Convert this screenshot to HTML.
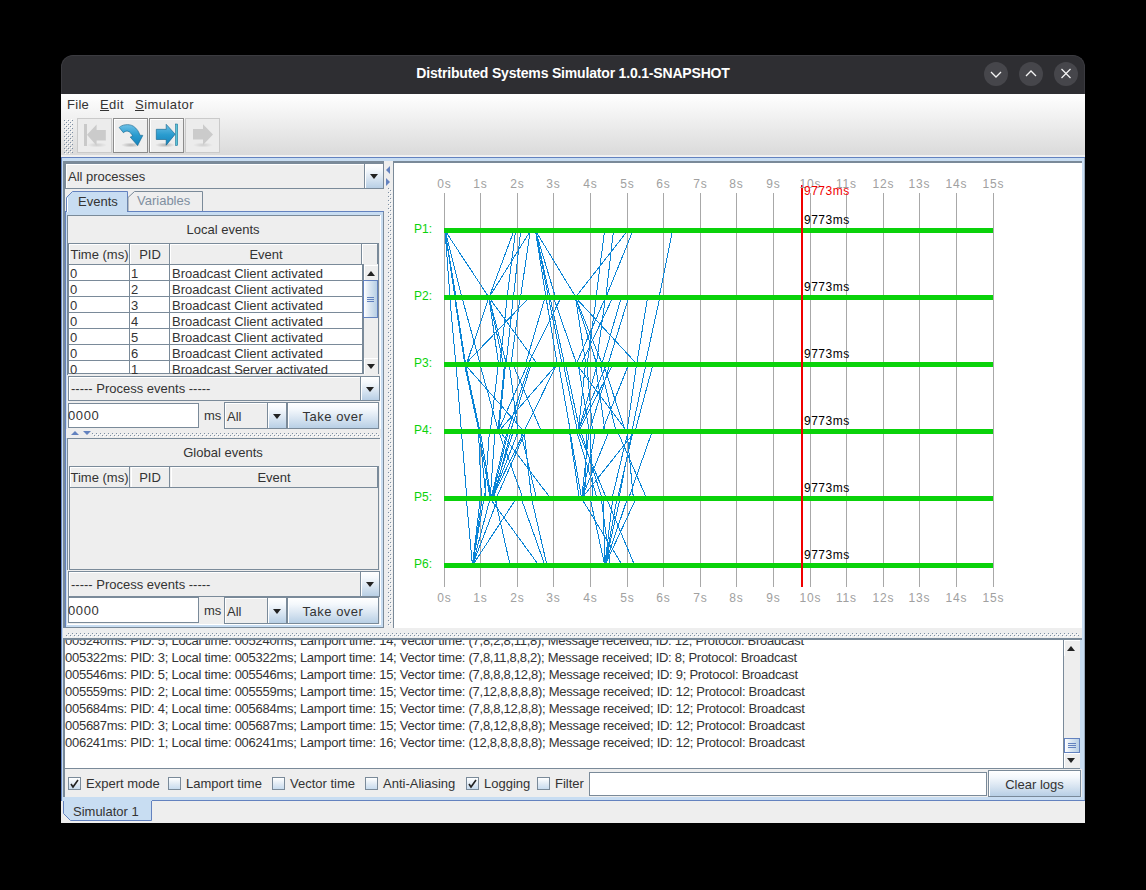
<!DOCTYPE html><html><head><meta charset="utf-8"><style>
html,body{margin:0;padding:0;width:1146px;height:890px;overflow:hidden;background:#000;font-family:"Liberation Sans", sans-serif;}
div{box-sizing:border-box;}
.dv{background-image:radial-gradient(circle at 1px 1px,#7a8a99 0.8px,transparent 1px);}
</style></head><body>
<div style="position:absolute;left:61px;top:80px;width:1024px;height:743px;background:#eeeeee;"></div>
<div style="position:absolute;left:61px;top:55px;width:1024px;height:39px;background:#2e2e32;border-radius:12px 12px 0 0;border:1px solid #3b3b40;border-bottom:none;"></div>
<div style="position:absolute;left:61px;top:64px;width:1024px;text-align:center;color:#ffffff;font-size:14px;font-weight:700;line-height:18px;letter-spacing:-0.18px;">Distributed Systems Simulator 1.0.1-SNAPSHOT</div>
<div style="position:absolute;left:984px;top:62px;width:24px;height:24px;background:#46464b;border-radius:50%;"></div>
<div style="position:absolute;left:1019px;top:62px;width:24px;height:24px;background:#46464b;border-radius:50%;"></div>
<div style="position:absolute;left:1054px;top:62px;width:24px;height:24px;background:#46464b;border-radius:50%;"></div>
<svg style="position:absolute;left:0;top:0" width="1146" height="890"><g stroke="#f4f4f4" stroke-width="1.3" fill="none"><polyline points="991,72 996,77 1001,72"/><polyline points="1026,76 1031,71 1036,76"/><line x1="1061.5" y1="69" x2="1070.5" y2="78"/><line x1="1070.5" y1="69" x2="1061.5" y2="78"/></g></svg>
<div style="position:absolute;left:61px;top:94px;width:1024px;height:61px;background:linear-gradient(#ffffff,#dadada);"></div>
<div style="position:absolute;left:61px;top:155px;width:1024px;height:2px;background:#f0f0f0;"></div>
<div style="position:absolute;left:67px;top:97px;font-size:13px;line-height:15px;color:#333333;font-weight:400;letter-spacing:0.3px;white-space:pre;">File</div>
<div style="position:absolute;left:100px;top:97px;font-size:13px;line-height:15px;color:#333333;font-weight:400;letter-spacing:0.4px;white-space:pre;"><u>E</u>dit</div>
<div style="position:absolute;left:135px;top:97px;font-size:13px;line-height:15px;color:#333333;font-weight:400;letter-spacing:0.45px;white-space:pre;"><u>S</u>imulator</div>
<svg style="position:absolute;left:0;top:0" width="1146" height="890" shape-rendering="crispEdges"><defs><pattern id="bump" x="0" y="0" width="4" height="4" patternUnits="userSpaceOnUse"><rect x="0" y="0" width="1" height="1" fill="#7c8ea3"/><rect x="1" y="1" width="1" height="1" fill="#ffffff"/><rect x="2" y="2" width="1" height="1" fill="#7c8ea3"/><rect x="3" y="3" width="1" height="1" fill="#ffffff"/></pattern></defs><rect x="64" y="119" width="9" height="35" fill="url(#bump)"/></svg>
<div style="position:absolute;left:77px;top:118px;width:35px;height:35px;border:1px solid #cacaca;background:#ececec;"></div>
<div style="position:absolute;left:113px;top:118px;width:35px;height:35px;border:1px solid #8c8c8c;background:#eeeeee;"></div>
<div style="position:absolute;left:114px;top:119px;width:33px;height:33px;border-top:1px solid #ffffff;border-left:1px solid #ffffff;"></div>
<div style="position:absolute;left:149px;top:118px;width:35px;height:35px;border:1px solid #8c8c8c;background:#eeeeee;"></div>
<div style="position:absolute;left:150px;top:119px;width:33px;height:33px;border-top:1px solid #ffffff;border-left:1px solid #ffffff;"></div>
<div style="position:absolute;left:185px;top:118px;width:35px;height:35px;border:1px solid #cacaca;background:#ececec;"></div>
<svg style="position:absolute;left:0;top:0" width="1146" height="890">
<defs>
<linearGradient id="bg1" x1="0" y1="0" x2="0" y2="1"><stop offset="0" stop-color="#6cc0e6"/><stop offset="0.5" stop-color="#2a9ccf"/><stop offset="1" stop-color="#1482bb"/></linearGradient>
<radialGradient id="sh" cx="0.5" cy="0.5" r="0.5"><stop offset="0" stop-color="#000" stop-opacity="0.25"/><stop offset="1" stop-color="#000" stop-opacity="0"/></radialGradient>
</defs>
<ellipse cx="97" cy="145" rx="10" ry="2.5" fill="url(#sh)" opacity="0.5"/>
<rect x="84" y="124" width="3" height="22" fill="#c9c9c9"/>
<path d="M87,134.7 L96.6,124.5 L96.6,129.9 L105.8,129.9 L105.8,140.5 L96.6,140.5 L96.6,145.7 Z" fill="#cbcbcb"/>
<ellipse cx="131" cy="145" rx="10" ry="2.5" fill="url(#sh)"/>
<path d="M119.2,127.5 C122,124.5 129,123.5 133.4,126.2 C137,128.5 139,132 139.9,135.2 L142.8,135.4 L137.6,145.6 L130.2,137 L132.7,136.3 C132,134.5 130,131.5 127.7,131.2 C126,131 124.5,131.6 123.4,132.7 Z" fill="url(#bg1)" stroke="#0d5f8a" stroke-width="0.6"/>
<ellipse cx="165" cy="145" rx="10" ry="2.5" fill="url(#sh)"/>
<path d="M156.3,129.3 L166.2,129.3 L166.2,124.3 L175.2,134.2 L166.2,145.2 L166.2,139.5 L156.3,139.5 Z" fill="url(#bg1)" stroke="#0d5f8a" stroke-width="0.6"/>
<rect x="175.5" y="124" width="2.2" height="21.5" fill="#5cc6d8" stroke="#0d5f8a" stroke-width="0.5"/>
<ellipse cx="203" cy="145" rx="10" ry="2.5" fill="url(#sh)" opacity="0.5"/>
<path d="M193,129 L203,129 L203,124.3 L213,134.5 L203,145 L203,139.5 L193,139.5 Z" fill="#cbcbcb"/>
</svg>
<div style="position:absolute;left:61px;top:157px;width:1024px;height:644px;background:#c8ddf2;border-top:1px solid #6382bf;border-left:1px solid #6382bf;border-bottom:1px solid #6382bf;"></div>
<div style="position:absolute;left:63px;top:161px;width:321px;height:467px;background:#eeeeee;border-top:2px solid #7a8a99;border-left:2px solid #7a8a99;"></div>
<div style="position:absolute;left:65px;top:163px;width:319px;height:26px;background:#eeeeee;border:1px solid #7a8a99;"></div>
<div style="position:absolute;left:66px;top:164px;width:298px;height:24px;border-top:1px solid #ffffff;border-left:1px solid #ffffff;"></div>
<div style="position:absolute;left:364px;top:163px;width:20px;height:26px;background:linear-gradient(#ffffff 0%,#f4f8fc 25%,#dde8f3 55%,#b8cfe5 100%);border:1px solid #7a8a99;"></div>
<div style="position:absolute;left:365px;top:164px;width:18px;height:24px;border-top:1px solid #ffffff;border-left:1px solid #ffffff;"></div>
<div style="position:absolute;left:369.5px;top:174.0px;width:0;height:0;border-left:4.5px solid transparent;border-right:4.5px solid transparent;border-top:5px solid #222;"></div>
<div style="position:absolute;left:68px;top:169px;font-size:13px;line-height:15px;color:#333333;font-weight:400;letter-spacing:0px;white-space:pre;">All processes</div>
<div style="position:absolute;left:65px;top:211px;width:319px;height:417px;background:#c8ddf2;border-top:1px solid #6382bf;border-left:1px solid #6382bf;border-right:1px solid #7a8a99;border-bottom:1px solid #7a8a99;"></div>
<div style="position:absolute;left:67px;top:215px;width:314px;height:410px;background:#eeeeee;border-right:1px solid #ffffff;border-bottom:1px solid #ffffff;"></div>
<svg style="position:absolute;left:0;top:0" width="1146" height="890"><path d="M66.5,212 L66.5,197.5 L72.5,191.5 L127.5,191.5 L127.5,211" fill="#c8ddf2" stroke="#6382bf" stroke-width="1"/><path d="M128,211 L128,197.5 L134.5,191.5 L202.5,191.5 L202.5,211" fill="#eeeeee" stroke="#7a8a99" stroke-width="1"/></svg>
<div style="position:absolute;left:67px;top:205px;width:60px;height:10px;background:#c8ddf2;"></div>
<div style="position:absolute;left:67px;top:198px;width:1px;height:14px;background:#ffffff;"></div>
<div style="position:absolute;left:78px;top:194px;font-size:13px;line-height:15px;color:#333333;font-weight:400;letter-spacing:0px;white-space:pre;">Events</div>
<div style="position:absolute;left:137px;top:193px;font-size:13px;line-height:15px;color:#7f8fa0;font-weight:400;letter-spacing:0px;white-space:pre;">Variables</div>
<div style="position:absolute;left:128px;top:211px;width:256px;height:1px;background:#6382bf;"></div>
<div style="position:absolute;left:67px;top:215px;width:313px;height:160px;border-top:1px solid #7a8a99;border-left:1px solid #7a8a99;"></div>
<div style="position:absolute;left:-77px;width:600px;text-align:center;top:222px;font-size:13px;line-height:15px;color:#333333;font-weight:400;letter-spacing:0px;white-space:pre;">Local events</div>
<div style="position:absolute;left:68px;top:243px;width:311px;height:131px;border:1px solid #7a8a99;background:#eeeeee;"></div>
<div style="position:absolute;left:69px;top:244px;width:61px;height:21px;border-right:1px solid #7a8a99;border-bottom:1px solid #7a8a99;background:#eeeeee;"></div>
<div style="position:absolute;left:69px;top:244px;width:60px;height:20px;border-top:1px solid #ffffff;border-left:1px solid #ffffff;"></div>
<div style="position:absolute;left:-200.5px;width:600px;text-align:center;top:247px;font-size:13px;line-height:15px;color:#333333;font-weight:400;letter-spacing:0px;white-space:pre;">Time (ms)</div>
<div style="position:absolute;left:130px;top:244px;width:40px;height:21px;border-right:1px solid #7a8a99;border-bottom:1px solid #7a8a99;background:#eeeeee;"></div>
<div style="position:absolute;left:130px;top:244px;width:39px;height:20px;border-top:1px solid #ffffff;border-left:1px solid #ffffff;"></div>
<div style="position:absolute;left:-150.0px;width:600px;text-align:center;top:247px;font-size:13px;line-height:15px;color:#333333;font-weight:400;letter-spacing:0px;white-space:pre;">PID</div>
<div style="position:absolute;left:170px;top:244px;width:192px;height:21px;border-right:1px solid #7a8a99;border-bottom:1px solid #7a8a99;background:#eeeeee;"></div>
<div style="position:absolute;left:170px;top:244px;width:191px;height:20px;border-top:1px solid #ffffff;border-left:1px solid #ffffff;"></div>
<div style="position:absolute;left:-34.0px;width:600px;text-align:center;top:247px;font-size:13px;line-height:15px;color:#333333;font-weight:400;letter-spacing:0px;white-space:pre;">Event</div>
<div style="position:absolute;left:362px;top:244px;width:16px;height:21px;border-right:1px solid #7a8a99;border-bottom:1px solid #7a8a99;background:#eeeeee;"></div>
<div style="position:absolute;left:362px;top:244px;width:15px;height:20px;border-top:1px solid #ffffff;border-left:1px solid #ffffff;"></div>
<div style="position:absolute;left:69px;top:265px;width:293px;height:109px;background:#ffffff;"></div>
<div style="position:absolute;left:69px;top:265px;width:61px;height:16px;border-right:1px solid #7a8a99;border-bottom:1px solid #7a8a99;"></div>
<div style="position:absolute;left:130px;top:265px;width:40px;height:16px;border-right:1px solid #7a8a99;border-bottom:1px solid #7a8a99;"></div>
<div style="position:absolute;left:170px;top:265px;width:193px;height:16px;border-right:1px solid #7a8a99;border-bottom:1px solid #7a8a99;"></div>
<div style="position:absolute;left:69px;top:265px;width:293px;height:16px;overflow:hidden;"><div style="position:absolute;left:1px;top:1px;font-size:13px;line-height:15px;color:#333333;white-space:pre">0</div><div style="position:absolute;left:62px;top:1px;font-size:13px;line-height:15px;color:#333333;white-space:pre">1</div><div style="position:absolute;left:103px;top:1px;font-size:13px;line-height:15px;color:#333333;white-space:pre">Broadcast Client activated</div></div>
<div style="position:absolute;left:69px;top:281px;width:61px;height:16px;border-right:1px solid #7a8a99;border-bottom:1px solid #7a8a99;"></div>
<div style="position:absolute;left:130px;top:281px;width:40px;height:16px;border-right:1px solid #7a8a99;border-bottom:1px solid #7a8a99;"></div>
<div style="position:absolute;left:170px;top:281px;width:193px;height:16px;border-right:1px solid #7a8a99;border-bottom:1px solid #7a8a99;"></div>
<div style="position:absolute;left:69px;top:281px;width:293px;height:16px;overflow:hidden;"><div style="position:absolute;left:1px;top:1px;font-size:13px;line-height:15px;color:#333333;white-space:pre">0</div><div style="position:absolute;left:62px;top:1px;font-size:13px;line-height:15px;color:#333333;white-space:pre">2</div><div style="position:absolute;left:103px;top:1px;font-size:13px;line-height:15px;color:#333333;white-space:pre">Broadcast Client activated</div></div>
<div style="position:absolute;left:69px;top:297px;width:61px;height:16px;border-right:1px solid #7a8a99;border-bottom:1px solid #7a8a99;"></div>
<div style="position:absolute;left:130px;top:297px;width:40px;height:16px;border-right:1px solid #7a8a99;border-bottom:1px solid #7a8a99;"></div>
<div style="position:absolute;left:170px;top:297px;width:193px;height:16px;border-right:1px solid #7a8a99;border-bottom:1px solid #7a8a99;"></div>
<div style="position:absolute;left:69px;top:297px;width:293px;height:16px;overflow:hidden;"><div style="position:absolute;left:1px;top:1px;font-size:13px;line-height:15px;color:#333333;white-space:pre">0</div><div style="position:absolute;left:62px;top:1px;font-size:13px;line-height:15px;color:#333333;white-space:pre">3</div><div style="position:absolute;left:103px;top:1px;font-size:13px;line-height:15px;color:#333333;white-space:pre">Broadcast Client activated</div></div>
<div style="position:absolute;left:69px;top:313px;width:61px;height:16px;border-right:1px solid #7a8a99;border-bottom:1px solid #7a8a99;"></div>
<div style="position:absolute;left:130px;top:313px;width:40px;height:16px;border-right:1px solid #7a8a99;border-bottom:1px solid #7a8a99;"></div>
<div style="position:absolute;left:170px;top:313px;width:193px;height:16px;border-right:1px solid #7a8a99;border-bottom:1px solid #7a8a99;"></div>
<div style="position:absolute;left:69px;top:313px;width:293px;height:16px;overflow:hidden;"><div style="position:absolute;left:1px;top:1px;font-size:13px;line-height:15px;color:#333333;white-space:pre">0</div><div style="position:absolute;left:62px;top:1px;font-size:13px;line-height:15px;color:#333333;white-space:pre">4</div><div style="position:absolute;left:103px;top:1px;font-size:13px;line-height:15px;color:#333333;white-space:pre">Broadcast Client activated</div></div>
<div style="position:absolute;left:69px;top:329px;width:61px;height:16px;border-right:1px solid #7a8a99;border-bottom:1px solid #7a8a99;"></div>
<div style="position:absolute;left:130px;top:329px;width:40px;height:16px;border-right:1px solid #7a8a99;border-bottom:1px solid #7a8a99;"></div>
<div style="position:absolute;left:170px;top:329px;width:193px;height:16px;border-right:1px solid #7a8a99;border-bottom:1px solid #7a8a99;"></div>
<div style="position:absolute;left:69px;top:329px;width:293px;height:16px;overflow:hidden;"><div style="position:absolute;left:1px;top:1px;font-size:13px;line-height:15px;color:#333333;white-space:pre">0</div><div style="position:absolute;left:62px;top:1px;font-size:13px;line-height:15px;color:#333333;white-space:pre">5</div><div style="position:absolute;left:103px;top:1px;font-size:13px;line-height:15px;color:#333333;white-space:pre">Broadcast Client activated</div></div>
<div style="position:absolute;left:69px;top:345px;width:61px;height:16px;border-right:1px solid #7a8a99;border-bottom:1px solid #7a8a99;"></div>
<div style="position:absolute;left:130px;top:345px;width:40px;height:16px;border-right:1px solid #7a8a99;border-bottom:1px solid #7a8a99;"></div>
<div style="position:absolute;left:170px;top:345px;width:193px;height:16px;border-right:1px solid #7a8a99;border-bottom:1px solid #7a8a99;"></div>
<div style="position:absolute;left:69px;top:345px;width:293px;height:16px;overflow:hidden;"><div style="position:absolute;left:1px;top:1px;font-size:13px;line-height:15px;color:#333333;white-space:pre">0</div><div style="position:absolute;left:62px;top:1px;font-size:13px;line-height:15px;color:#333333;white-space:pre">6</div><div style="position:absolute;left:103px;top:1px;font-size:13px;line-height:15px;color:#333333;white-space:pre">Broadcast Client activated</div></div>
<div style="position:absolute;left:69px;top:361px;width:61px;height:13px;border-right:1px solid #7a8a99;border-bottom:1px solid #7a8a99;"></div>
<div style="position:absolute;left:130px;top:361px;width:40px;height:13px;border-right:1px solid #7a8a99;border-bottom:1px solid #7a8a99;"></div>
<div style="position:absolute;left:170px;top:361px;width:193px;height:13px;border-right:1px solid #7a8a99;border-bottom:1px solid #7a8a99;"></div>
<div style="position:absolute;left:69px;top:361px;width:293px;height:13px;overflow:hidden;"><div style="position:absolute;left:1px;top:1px;font-size:13px;line-height:15px;color:#333333;white-space:pre">0</div><div style="position:absolute;left:62px;top:1px;font-size:13px;line-height:15px;color:#333333;white-space:pre">1</div><div style="position:absolute;left:103px;top:1px;font-size:13px;line-height:15px;color:#333333;white-space:pre">Broadcast Server activated</div></div>
<div style="position:absolute;left:363px;top:264px;width:15px;height:110px;background:#eeeeee;border-left:1px solid #7a8a99;"></div>
<div style="position:absolute;left:364px;top:265px;width:14px;height:15px;border-top:1px solid #fff;border-left:1px solid #fff;"></div>
<div style="position:absolute;left:366.5px;top:270.5px;width:0;height:0;border-left:4.5px solid transparent;border-right:4.5px solid transparent;border-bottom:5px solid #222;"></div>
<div style="position:absolute;left:363px;top:280px;width:15px;height:38px;background:linear-gradient(90deg,#ffffff,#dde8f3 40%,#b8cfe5);border:1px solid #6382bf;"></div>
<div style="position:absolute;left:367px;top:297px;width:7px;height:1px;background:#6382bf;"></div>
<div style="position:absolute;left:367px;top:299px;width:7px;height:1px;background:#6382bf;"></div>
<div style="position:absolute;left:367px;top:301px;width:7px;height:1px;background:#6382bf;"></div>
<div style="position:absolute;left:364px;top:358px;width:14px;height:16px;border-top:1px solid #fff;border-left:1px solid #fff;"></div>
<div style="position:absolute;left:366.5px;top:363.5px;width:0;height:0;border-left:4.5px solid transparent;border-right:4.5px solid transparent;border-top:5px solid #222;"></div>
<div style="position:absolute;left:68px;top:376px;width:312px;height:25px;background:#eeeeee;border:1px solid #7a8a99;"></div>
<div style="position:absolute;left:69px;top:377px;width:291px;height:23px;border-top:1px solid #ffffff;border-left:1px solid #ffffff;"></div>
<div style="position:absolute;left:360px;top:376px;width:20px;height:25px;background:linear-gradient(#ffffff 0%,#f4f8fc 25%,#dde8f3 55%,#b8cfe5 100%);border:1px solid #7a8a99;"></div>
<div style="position:absolute;left:361px;top:377px;width:18px;height:23px;border-top:1px solid #ffffff;border-left:1px solid #ffffff;"></div>
<div style="position:absolute;left:365.5px;top:386.5px;width:0;height:0;border-left:4.5px solid transparent;border-right:4.5px solid transparent;border-top:5px solid #222;"></div>
<div style="position:absolute;left:71px;top:381px;font-size:13px;line-height:15px;color:#333333;font-weight:400;letter-spacing:0px;white-space:pre;">----- Process events -----</div>
<div style="position:absolute;left:68px;top:403px;width:131px;height:25px;background:#ffffff;border:1px solid #7a8a99;"></div>
<div style="position:absolute;left:68px;top:408px;font-size:13px;line-height:15px;color:#333333;font-weight:400;letter-spacing:0.6px;white-space:pre;">0000</div>
<div style="position:absolute;left:204px;top:408px;font-size:13px;line-height:15px;color:#333333;font-weight:400;letter-spacing:0px;white-space:pre;">ms</div>
<div style="position:absolute;left:224px;top:402px;width:63px;height:27px;background:#eeeeee;border:1px solid #7a8a99;"></div>
<div style="position:absolute;left:225px;top:403px;width:42px;height:25px;border-top:1px solid #ffffff;border-left:1px solid #ffffff;"></div>
<div style="position:absolute;left:267px;top:402px;width:20px;height:27px;background:linear-gradient(#ffffff 0%,#f4f8fc 25%,#dde8f3 55%,#b8cfe5 100%);border:1px solid #7a8a99;"></div>
<div style="position:absolute;left:268px;top:403px;width:18px;height:25px;border-top:1px solid #ffffff;border-left:1px solid #ffffff;"></div>
<div style="position:absolute;left:272.5px;top:413.5px;width:0;height:0;border-left:4.5px solid transparent;border-right:4.5px solid transparent;border-top:5px solid #222;"></div>
<div style="position:absolute;left:227px;top:409px;font-size:13px;line-height:15px;color:#333333;font-weight:400;letter-spacing:0px;white-space:pre;">All</div>
<div style="position:absolute;left:287px;top:402px;width:92px;height:27px;background:linear-gradient(#ffffff 0%,#f4f8fc 25%,#dde8f3 55%,#b8cfe5 100%);border:1px solid #7a8a99;"></div>
<div style="position:absolute;left:288px;top:403px;width:90px;height:25px;border-top:1px solid #ffffff;border-left:1px solid #ffffff;"></div>
<div style="position:absolute;left:33.0px;width:600px;text-align:center;top:409px;font-size:13px;line-height:15px;color:#333333;font-weight:400;letter-spacing:0.5px;white-space:pre;">Take over</div>
<div style="position:absolute;left:66px;top:429px;width:315px;height:9px;background:#eeeeee;"></div>
<svg style="position:absolute;left:0;top:0" width="1146" height="890" shape-rendering="crispEdges"><rect x="92" y="433" width="288" height="4" fill="url(#bump1)"/></svg>
<div style="position:absolute;left:71.0px;top:431.0px;width:0;height:0;border-left:4.0px solid transparent;border-right:4.0px solid transparent;border-bottom:4px solid #6382bf;"></div>
<div style="position:absolute;left:83.0px;top:431.0px;width:0;height:0;border-left:4.0px solid transparent;border-right:4.0px solid transparent;border-top:4px solid #6382bf;"></div>
<div style="position:absolute;left:67px;top:438px;width:313px;height:132px;border-top:1px solid #7a8a99;border-left:1px solid #7a8a99;"></div>
<div style="position:absolute;left:-77px;width:600px;text-align:center;top:445px;font-size:13px;line-height:15px;color:#333333;font-weight:400;letter-spacing:0px;white-space:pre;">Global events</div>
<div style="position:absolute;left:69px;top:466px;width:310px;height:104px;border:1px solid #7a8a99;border-top:none;background:#eeeeee;"></div>
<div style="position:absolute;left:69px;top:466px;width:61px;height:22px;border-right:1px solid #7a8a99;border-bottom:1px solid #7a8a99;border-top:1px solid #7a8a99;"></div>
<div style="position:absolute;left:70px;top:467px;width:59px;height:20px;border-top:1px solid #ffffff;border-left:1px solid #ffffff;"></div>
<div style="position:absolute;left:-200.5px;width:600px;text-align:center;top:470px;font-size:13px;line-height:15px;color:#333333;font-weight:400;letter-spacing:0px;white-space:pre;">Time (ms)</div>
<div style="position:absolute;left:130px;top:466px;width:40px;height:22px;border-right:1px solid #7a8a99;border-bottom:1px solid #7a8a99;border-top:1px solid #7a8a99;"></div>
<div style="position:absolute;left:131px;top:467px;width:38px;height:20px;border-top:1px solid #ffffff;border-left:1px solid #ffffff;"></div>
<div style="position:absolute;left:-150.0px;width:600px;text-align:center;top:470px;font-size:13px;line-height:15px;color:#333333;font-weight:400;letter-spacing:0px;white-space:pre;">PID</div>
<div style="position:absolute;left:170px;top:466px;width:208px;height:22px;border-right:1px solid #7a8a99;border-bottom:1px solid #7a8a99;border-top:1px solid #7a8a99;"></div>
<div style="position:absolute;left:171px;top:467px;width:206px;height:20px;border-top:1px solid #ffffff;border-left:1px solid #ffffff;"></div>
<div style="position:absolute;left:-26.0px;width:600px;text-align:center;top:470px;font-size:13px;line-height:15px;color:#333333;font-weight:400;letter-spacing:0px;white-space:pre;">Event</div>
<div style="position:absolute;left:68px;top:571px;width:312px;height:26px;background:#eeeeee;border:1px solid #7a8a99;"></div>
<div style="position:absolute;left:69px;top:572px;width:291px;height:24px;border-top:1px solid #ffffff;border-left:1px solid #ffffff;"></div>
<div style="position:absolute;left:360px;top:571px;width:20px;height:26px;background:linear-gradient(#ffffff 0%,#f4f8fc 25%,#dde8f3 55%,#b8cfe5 100%);border:1px solid #7a8a99;"></div>
<div style="position:absolute;left:361px;top:572px;width:18px;height:24px;border-top:1px solid #ffffff;border-left:1px solid #ffffff;"></div>
<div style="position:absolute;left:365.5px;top:582.0px;width:0;height:0;border-left:4.5px solid transparent;border-right:4.5px solid transparent;border-top:5px solid #222;"></div>
<div style="position:absolute;left:71px;top:577px;font-size:13px;line-height:15px;color:#333333;font-weight:400;letter-spacing:0px;white-space:pre;">----- Process events -----</div>
<div style="position:absolute;left:68px;top:597px;width:131px;height:26px;background:#ffffff;border:1px solid #7a8a99;"></div>
<div style="position:absolute;left:68px;top:603px;font-size:13px;line-height:15px;color:#333333;font-weight:400;letter-spacing:0.6px;white-space:pre;">0000</div>
<div style="position:absolute;left:204px;top:603px;font-size:13px;line-height:15px;color:#333333;font-weight:400;letter-spacing:0px;white-space:pre;">ms</div>
<div style="position:absolute;left:224px;top:597px;width:63px;height:27px;background:#eeeeee;border:1px solid #7a8a99;"></div>
<div style="position:absolute;left:225px;top:598px;width:42px;height:25px;border-top:1px solid #ffffff;border-left:1px solid #ffffff;"></div>
<div style="position:absolute;left:267px;top:597px;width:20px;height:27px;background:linear-gradient(#ffffff 0%,#f4f8fc 25%,#dde8f3 55%,#b8cfe5 100%);border:1px solid #7a8a99;"></div>
<div style="position:absolute;left:268px;top:598px;width:18px;height:25px;border-top:1px solid #ffffff;border-left:1px solid #ffffff;"></div>
<div style="position:absolute;left:272.5px;top:608.5px;width:0;height:0;border-left:4.5px solid transparent;border-right:4.5px solid transparent;border-top:5px solid #222;"></div>
<div style="position:absolute;left:227px;top:604px;font-size:13px;line-height:15px;color:#333333;font-weight:400;letter-spacing:0px;white-space:pre;">All</div>
<div style="position:absolute;left:287px;top:597px;width:92px;height:27px;background:linear-gradient(#ffffff 0%,#f4f8fc 25%,#dde8f3 55%,#b8cfe5 100%);border:1px solid #7a8a99;"></div>
<div style="position:absolute;left:288px;top:598px;width:90px;height:25px;border-top:1px solid #ffffff;border-left:1px solid #ffffff;"></div>
<div style="position:absolute;left:33.0px;width:600px;text-align:center;top:604px;font-size:13px;line-height:15px;color:#333333;font-weight:400;letter-spacing:0.5px;white-space:pre;">Take over</div>
<div style="position:absolute;left:384px;top:161px;width:9px;height:467px;background:#eeeeee;"></div>
<svg style="position:absolute;left:0;top:0" width="1146" height="890" shape-rendering="crispEdges"><rect x="388" y="188" width="4" height="438" fill="url(#bump)"/></svg>
<svg style="position:absolute;left:0;top:0" width="1146" height="890"><path d="M390,166 L386,170 L390,174 Z" fill="#6382bf"/><path d="M386,178 L390,182 L386,186 Z" fill="#6382bf"/></svg>
<div style="position:absolute;left:393px;top:161px;width:689px;height:467px;background:#ffffff;border-top:2px solid #7a8a99;border-left:1px solid #7a8a99;"></div>
<svg style="position:absolute;left:0;top:0" width="1146" height="890" shape-rendering="crispEdges"><line x1="444.5" y1="193" x2="444.5" y2="587" stroke="#a8a8a8" stroke-width="1"/><line x1="480.5" y1="193" x2="480.5" y2="587" stroke="#a8a8a8" stroke-width="1"/><line x1="517.5" y1="193" x2="517.5" y2="587" stroke="#a8a8a8" stroke-width="1"/><line x1="553.5" y1="193" x2="553.5" y2="587" stroke="#a8a8a8" stroke-width="1"/><line x1="590.5" y1="193" x2="590.5" y2="587" stroke="#a8a8a8" stroke-width="1"/><line x1="627.5" y1="193" x2="627.5" y2="587" stroke="#a8a8a8" stroke-width="1"/><line x1="663.5" y1="193" x2="663.5" y2="587" stroke="#a8a8a8" stroke-width="1"/><line x1="700.5" y1="193" x2="700.5" y2="587" stroke="#a8a8a8" stroke-width="1"/><line x1="736.5" y1="193" x2="736.5" y2="587" stroke="#a8a8a8" stroke-width="1"/><line x1="773.5" y1="193" x2="773.5" y2="587" stroke="#a8a8a8" stroke-width="1"/><line x1="810.5" y1="193" x2="810.5" y2="587" stroke="#a8a8a8" stroke-width="1"/><line x1="846.5" y1="193" x2="846.5" y2="587" stroke="#a8a8a8" stroke-width="1"/><line x1="883.5" y1="193" x2="883.5" y2="587" stroke="#a8a8a8" stroke-width="1"/><line x1="919.5" y1="193" x2="919.5" y2="587" stroke="#a8a8a8" stroke-width="1"/><line x1="956.5" y1="193" x2="956.5" y2="587" stroke="#a8a8a8" stroke-width="1"/><line x1="993.5" y1="193" x2="993.5" y2="587" stroke="#a8a8a8" stroke-width="1"/></svg>
<svg style="position:absolute;left:0;top:0" width="1146" height="890"><g stroke="#0a84d6" stroke-width="1" fill="none" shape-rendering="crispEdges"><line x1="445" y1="230.5" x2="489" y2="297.5"/><line x1="445" y1="230.5" x2="462" y2="297.5"/><line x1="445" y1="230.5" x2="455" y2="297.5"/><line x1="445" y1="230.5" x2="456" y2="297.5"/><line x1="445" y1="230.5" x2="450" y2="297.5"/><line x1="514" y1="230.5" x2="489" y2="297.5"/><line x1="515.6" y1="230.5" x2="507" y2="297.5"/><line x1="520.7" y1="230.5" x2="513.4" y2="297.5"/><line x1="530.6" y1="230.5" x2="489" y2="297.5"/><line x1="530.3" y1="230.5" x2="520.5" y2="297.5"/><line x1="535.4" y1="230.5" x2="576" y2="297.5"/><line x1="535.4" y1="230.5" x2="555.5" y2="297.5"/><line x1="535.4" y1="230.5" x2="546" y2="297.5"/><line x1="535.4" y1="230.5" x2="548.5" y2="297.5"/><line x1="535.4" y1="230.5" x2="550" y2="297.5"/><line x1="604.6" y1="230.5" x2="596" y2="297.5"/><line x1="613.5" y1="230.5" x2="605.8" y2="297.5"/><line x1="627.8" y1="230.5" x2="575.3" y2="297.5"/><line x1="633" y1="230.5" x2="605.8" y2="297.5"/><line x1="672.6" y1="230.5" x2="659" y2="297.5"/><line x1="449.8" y1="297.5" x2="455.9" y2="364.5"/><line x1="454.6" y1="297.5" x2="464.9" y2="364.5"/><line x1="455.3" y1="297.5" x2="465.7" y2="364.5"/><line x1="462" y1="297.5" x2="480.3" y2="364.5"/><line x1="489" y1="297.5" x2="466.3" y2="364.5"/><line x1="489" y1="297.5" x2="498.6" y2="364.5"/><line x1="489" y1="297.5" x2="503.5" y2="364.5"/><line x1="489" y1="297.5" x2="506.6" y2="364.5"/><line x1="489" y1="297.5" x2="537.7" y2="364.5"/><line x1="507.2" y1="297.5" x2="499.9" y2="364.5"/><line x1="513.3" y1="297.5" x2="506" y2="364.5"/><line x1="520" y1="297.5" x2="511" y2="364.5"/><line x1="529.2" y1="297.5" x2="465" y2="364.5"/><line x1="545" y1="297.5" x2="525.5" y2="364.5"/><line x1="561" y1="297.5" x2="528" y2="364.5"/><line x1="546" y1="297.5" x2="557.3" y2="364.5"/><line x1="548.5" y1="297.5" x2="562.2" y2="364.5"/><line x1="550" y1="297.5" x2="564.6" y2="364.5"/><line x1="553.6" y1="297.5" x2="576.8" y2="364.5"/><line x1="575.5" y1="297.5" x2="637.2" y2="364.5"/><line x1="575.5" y1="297.5" x2="585.9" y2="364.5"/><line x1="575.5" y1="297.5" x2="596.9" y2="364.5"/><line x1="575.5" y1="297.5" x2="602.4" y2="364.5"/><line x1="596.3" y1="297.5" x2="587.1" y2="364.5"/><line x1="605.4" y1="297.5" x2="576.1" y2="364.5"/><line x1="605.4" y1="297.5" x2="596.3" y2="364.5"/><line x1="612.8" y1="297.5" x2="581" y2="364.5"/><line x1="621.3" y1="297.5" x2="601.8" y2="364.5"/><line x1="628.6" y1="297.5" x2="607.9" y2="364.5"/><line x1="647.6" y1="297.5" x2="636.6" y2="364.5"/><line x1="659.8" y1="297.5" x2="645.1" y2="364.5"/><line x1="456" y1="364.5" x2="461.4" y2="431.5"/><line x1="464.5" y1="364.5" x2="479" y2="431.5"/><line x1="465.5" y1="364.5" x2="480" y2="431.5"/><line x1="480" y1="364.5" x2="498.6" y2="431.5"/><line x1="465" y1="364.5" x2="524" y2="431.5"/><line x1="556.7" y1="364.5" x2="498.6" y2="431.5"/><line x1="498.3" y1="364.5" x2="490.3" y2="431.5"/><line x1="504.5" y1="364.5" x2="497.9" y2="431.5"/><line x1="505.5" y1="364.5" x2="498.8" y2="431.5"/><line x1="509.3" y1="364.5" x2="518" y2="431.5"/><line x1="527.5" y1="364.5" x2="497.9" y2="431.5"/><line x1="529.5" y1="364.5" x2="507.5" y2="431.5"/><line x1="531" y1="364.5" x2="510.5" y2="431.5"/><line x1="513" y1="364.5" x2="541.4" y2="431.5"/><line x1="556.7" y1="364.5" x2="524" y2="431.5"/><line x1="558.7" y1="364.5" x2="570.4" y2="431.5"/><line x1="563.4" y1="364.5" x2="577.5" y2="431.5"/><line x1="565.7" y1="364.5" x2="580" y2="431.5"/><line x1="576.7" y1="364.5" x2="627" y2="431.5"/><line x1="578.3" y1="364.5" x2="589.3" y2="431.5"/><line x1="585.4" y1="364.5" x2="578.3" y2="431.5"/><line x1="587" y1="364.5" x2="592.5" y2="431.5"/><line x1="595.6" y1="364.5" x2="605" y2="431.5"/><line x1="597.2" y1="364.5" x2="578.3" y2="431.5"/><line x1="600.3" y1="364.5" x2="616" y2="431.5"/><line x1="603.5" y1="364.5" x2="625.5" y2="431.5"/><line x1="606.6" y1="364.5" x2="577.5" y2="431.5"/><line x1="609.8" y1="364.5" x2="589.3" y2="431.5"/><line x1="612.8" y1="364.5" x2="578.6" y2="431.5"/><line x1="628.6" y1="364.5" x2="601.9" y2="431.5"/><line x1="636.5" y1="364.5" x2="627" y2="431.5"/><line x1="645.9" y1="364.5" x2="631.8" y2="431.5"/><line x1="653" y1="364.5" x2="635" y2="431.5"/><line x1="461.4" y1="431.5" x2="466.9" y2="498.5"/><line x1="478.5" y1="431.5" x2="481.5" y2="498.5"/><line x1="479.5" y1="431.5" x2="486" y2="498.5"/><line x1="480.3" y1="431.5" x2="491.3" y2="498.5"/><line x1="508.4" y1="431.5" x2="492" y2="498.5"/><line x1="513.3" y1="431.5" x2="492" y2="498.5"/><line x1="518.2" y1="431.5" x2="492" y2="498.5"/><line x1="524.3" y1="431.5" x2="492" y2="498.5"/><line x1="498.6" y1="431.5" x2="523" y2="498.5"/><line x1="500" y1="431.5" x2="550.7" y2="498.5"/><line x1="520.6" y1="431.5" x2="536.5" y2="498.5"/><line x1="524" y1="431.5" x2="531.6" y2="498.5"/><line x1="525.5" y1="431.5" x2="496.2" y2="498.5"/><line x1="489.4" y1="431.5" x2="484.6" y2="498.5"/><line x1="495" y1="431.5" x2="490.2" y2="498.5"/><line x1="507" y1="431.5" x2="491" y2="498.5"/><line x1="511" y1="431.5" x2="493.5" y2="498.5"/><line x1="478.9" y1="431.5" x2="490.2" y2="498.5"/><line x1="569.5" y1="431.5" x2="579.3" y2="498.5"/><line x1="635" y1="431.5" x2="581.6" y2="498.5"/><line x1="609" y1="431.5" x2="581.6" y2="498.5"/><line x1="595.6" y1="431.5" x2="581.6" y2="498.5"/><line x1="570" y1="431.5" x2="581.6" y2="498.5"/><line x1="589" y1="431.5" x2="581.6" y2="498.5"/><line x1="576.7" y1="431.5" x2="597.2" y2="498.5"/><line x1="578.3" y1="431.5" x2="606.6" y2="498.5"/><line x1="581" y1="431.5" x2="602" y2="498.5"/><line x1="587" y1="431.5" x2="584.6" y2="498.5"/><line x1="590" y1="431.5" x2="593" y2="498.5"/><line x1="617.6" y1="431.5" x2="646.7" y2="498.5"/><line x1="627" y1="431.5" x2="633.4" y2="498.5"/><line x1="632" y1="431.5" x2="618.9" y2="498.5"/><line x1="633" y1="431.5" x2="617.6" y2="498.5"/><line x1="652.2" y1="431.5" x2="628.6" y2="498.5"/><line x1="628" y1="431.5" x2="612" y2="498.5"/><line x1="466.3" y1="498.5" x2="472.4" y2="565.5"/><line x1="480.3" y1="498.5" x2="472.4" y2="565.5"/><line x1="482.1" y1="498.5" x2="472.4" y2="565.5"/><line x1="484" y1="498.5" x2="472.4" y2="565.5"/><line x1="490.1" y1="498.5" x2="472.4" y2="565.5"/><line x1="498" y1="498.5" x2="472.4" y2="565.5"/><line x1="516.3" y1="498.5" x2="472.4" y2="565.5"/><line x1="490" y1="498.5" x2="539" y2="565.5"/><line x1="495" y1="498.5" x2="510.2" y2="565.5"/><line x1="521.2" y1="498.5" x2="545" y2="565.5"/><line x1="531.6" y1="498.5" x2="547" y2="565.5"/><line x1="581.6" y1="498.5" x2="622.5" y2="565.5"/><line x1="590.2" y1="498.5" x2="604.8" y2="565.5"/><line x1="601.2" y1="498.5" x2="610.3" y2="565.5"/><line x1="603" y1="498.5" x2="604.8" y2="565.5"/><line x1="606.6" y1="498.5" x2="634.7" y2="565.5"/><line x1="612.8" y1="498.5" x2="604.8" y2="565.5"/><line x1="617" y1="498.5" x2="604.8" y2="565.5"/><line x1="620" y1="498.5" x2="604.8" y2="565.5"/><line x1="627.4" y1="498.5" x2="604.8" y2="565.5"/><line x1="636" y1="498.5" x2="604.8" y2="565.5"/></g></svg>
<svg style="position:absolute;left:0;top:0" width="1146" height="890" shape-rendering="crispEdges"><rect x="444" y="228" width="549" height="5" fill="#0ad20a"/><rect x="444" y="295" width="549" height="5" fill="#0ad20a"/><rect x="444" y="362" width="549" height="5" fill="#0ad20a"/><rect x="444" y="429" width="549" height="5" fill="#0ad20a"/><rect x="444" y="496" width="549" height="5" fill="#0ad20a"/><rect x="444" y="563" width="549" height="5" fill="#0ad20a"/><rect x="801" y="185" width="2" height="402" fill="#f00000"/></svg>
<div style="position:absolute;left:414px;width:60px;text-align:center;top:178px;font-size:12px;line-height:13px;color:#a0a0a0;white-space:pre;letter-spacing:0.8px;text-indent:0.8px">0s</div>
<div style="position:absolute;left:414px;width:60px;text-align:center;top:592px;font-size:12px;line-height:13px;color:#a0a0a0;white-space:pre;letter-spacing:0.8px;text-indent:0.8px">0s</div>
<div style="position:absolute;left:450px;width:60px;text-align:center;top:178px;font-size:12px;line-height:13px;color:#a0a0a0;white-space:pre;letter-spacing:0.8px;text-indent:0.8px">1s</div>
<div style="position:absolute;left:450px;width:60px;text-align:center;top:592px;font-size:12px;line-height:13px;color:#a0a0a0;white-space:pre;letter-spacing:0.8px;text-indent:0.8px">1s</div>
<div style="position:absolute;left:487px;width:60px;text-align:center;top:178px;font-size:12px;line-height:13px;color:#a0a0a0;white-space:pre;letter-spacing:0.8px;text-indent:0.8px">2s</div>
<div style="position:absolute;left:487px;width:60px;text-align:center;top:592px;font-size:12px;line-height:13px;color:#a0a0a0;white-space:pre;letter-spacing:0.8px;text-indent:0.8px">2s</div>
<div style="position:absolute;left:523px;width:60px;text-align:center;top:178px;font-size:12px;line-height:13px;color:#a0a0a0;white-space:pre;letter-spacing:0.8px;text-indent:0.8px">3s</div>
<div style="position:absolute;left:523px;width:60px;text-align:center;top:592px;font-size:12px;line-height:13px;color:#a0a0a0;white-space:pre;letter-spacing:0.8px;text-indent:0.8px">3s</div>
<div style="position:absolute;left:560px;width:60px;text-align:center;top:178px;font-size:12px;line-height:13px;color:#a0a0a0;white-space:pre;letter-spacing:0.8px;text-indent:0.8px">4s</div>
<div style="position:absolute;left:560px;width:60px;text-align:center;top:592px;font-size:12px;line-height:13px;color:#a0a0a0;white-space:pre;letter-spacing:0.8px;text-indent:0.8px">4s</div>
<div style="position:absolute;left:597px;width:60px;text-align:center;top:178px;font-size:12px;line-height:13px;color:#a0a0a0;white-space:pre;letter-spacing:0.8px;text-indent:0.8px">5s</div>
<div style="position:absolute;left:597px;width:60px;text-align:center;top:592px;font-size:12px;line-height:13px;color:#a0a0a0;white-space:pre;letter-spacing:0.8px;text-indent:0.8px">5s</div>
<div style="position:absolute;left:633px;width:60px;text-align:center;top:178px;font-size:12px;line-height:13px;color:#a0a0a0;white-space:pre;letter-spacing:0.8px;text-indent:0.8px">6s</div>
<div style="position:absolute;left:633px;width:60px;text-align:center;top:592px;font-size:12px;line-height:13px;color:#a0a0a0;white-space:pre;letter-spacing:0.8px;text-indent:0.8px">6s</div>
<div style="position:absolute;left:670px;width:60px;text-align:center;top:178px;font-size:12px;line-height:13px;color:#a0a0a0;white-space:pre;letter-spacing:0.8px;text-indent:0.8px">7s</div>
<div style="position:absolute;left:670px;width:60px;text-align:center;top:592px;font-size:12px;line-height:13px;color:#a0a0a0;white-space:pre;letter-spacing:0.8px;text-indent:0.8px">7s</div>
<div style="position:absolute;left:706px;width:60px;text-align:center;top:178px;font-size:12px;line-height:13px;color:#a0a0a0;white-space:pre;letter-spacing:0.8px;text-indent:0.8px">8s</div>
<div style="position:absolute;left:706px;width:60px;text-align:center;top:592px;font-size:12px;line-height:13px;color:#a0a0a0;white-space:pre;letter-spacing:0.8px;text-indent:0.8px">8s</div>
<div style="position:absolute;left:743px;width:60px;text-align:center;top:178px;font-size:12px;line-height:13px;color:#a0a0a0;white-space:pre;letter-spacing:0.8px;text-indent:0.8px">9s</div>
<div style="position:absolute;left:743px;width:60px;text-align:center;top:592px;font-size:12px;line-height:13px;color:#a0a0a0;white-space:pre;letter-spacing:0.8px;text-indent:0.8px">9s</div>
<div style="position:absolute;left:780px;width:60px;text-align:center;top:178px;font-size:12px;line-height:13px;color:#a0a0a0;white-space:pre;letter-spacing:0.8px;text-indent:0.8px">10s</div>
<div style="position:absolute;left:780px;width:60px;text-align:center;top:592px;font-size:12px;line-height:13px;color:#a0a0a0;white-space:pre;letter-spacing:0.8px;text-indent:0.8px">10s</div>
<div style="position:absolute;left:816px;width:60px;text-align:center;top:178px;font-size:12px;line-height:13px;color:#a0a0a0;white-space:pre;letter-spacing:0.8px;text-indent:0.8px">11s</div>
<div style="position:absolute;left:816px;width:60px;text-align:center;top:592px;font-size:12px;line-height:13px;color:#a0a0a0;white-space:pre;letter-spacing:0.8px;text-indent:0.8px">11s</div>
<div style="position:absolute;left:853px;width:60px;text-align:center;top:178px;font-size:12px;line-height:13px;color:#a0a0a0;white-space:pre;letter-spacing:0.8px;text-indent:0.8px">12s</div>
<div style="position:absolute;left:853px;width:60px;text-align:center;top:592px;font-size:12px;line-height:13px;color:#a0a0a0;white-space:pre;letter-spacing:0.8px;text-indent:0.8px">12s</div>
<div style="position:absolute;left:889px;width:60px;text-align:center;top:178px;font-size:12px;line-height:13px;color:#a0a0a0;white-space:pre;letter-spacing:0.8px;text-indent:0.8px">13s</div>
<div style="position:absolute;left:889px;width:60px;text-align:center;top:592px;font-size:12px;line-height:13px;color:#a0a0a0;white-space:pre;letter-spacing:0.8px;text-indent:0.8px">13s</div>
<div style="position:absolute;left:926px;width:60px;text-align:center;top:178px;font-size:12px;line-height:13px;color:#a0a0a0;white-space:pre;letter-spacing:0.8px;text-indent:0.8px">14s</div>
<div style="position:absolute;left:926px;width:60px;text-align:center;top:592px;font-size:12px;line-height:13px;color:#a0a0a0;white-space:pre;letter-spacing:0.8px;text-indent:0.8px">14s</div>
<div style="position:absolute;left:963px;width:60px;text-align:center;top:178px;font-size:12px;line-height:13px;color:#a0a0a0;white-space:pre;letter-spacing:0.8px;text-indent:0.8px">15s</div>
<div style="position:absolute;left:963px;width:60px;text-align:center;top:592px;font-size:12px;line-height:13px;color:#a0a0a0;white-space:pre;letter-spacing:0.8px;text-indent:0.8px">15s</div>
<div style="position:absolute;left:414px;top:223px;font-size:12px;line-height:13px;color:#0ad20a;white-space:pre">P1:</div>
<div style="position:absolute;left:804px;top:214px;font-size:12px;line-height:13px;color:#000000;white-space:pre;letter-spacing:0.5px">9773ms</div>
<div style="position:absolute;left:414px;top:290px;font-size:12px;line-height:13px;color:#0ad20a;white-space:pre">P2:</div>
<div style="position:absolute;left:804px;top:281px;font-size:12px;line-height:13px;color:#000000;white-space:pre;letter-spacing:0.5px">9773ms</div>
<div style="position:absolute;left:414px;top:357px;font-size:12px;line-height:13px;color:#0ad20a;white-space:pre">P3:</div>
<div style="position:absolute;left:804px;top:348px;font-size:12px;line-height:13px;color:#000000;white-space:pre;letter-spacing:0.5px">9773ms</div>
<div style="position:absolute;left:414px;top:424px;font-size:12px;line-height:13px;color:#0ad20a;white-space:pre">P4:</div>
<div style="position:absolute;left:804px;top:415px;font-size:12px;line-height:13px;color:#000000;white-space:pre;letter-spacing:0.5px">9773ms</div>
<div style="position:absolute;left:414px;top:491px;font-size:12px;line-height:13px;color:#0ad20a;white-space:pre">P5:</div>
<div style="position:absolute;left:804px;top:482px;font-size:12px;line-height:13px;color:#000000;white-space:pre;letter-spacing:0.5px">9773ms</div>
<div style="position:absolute;left:414px;top:558px;font-size:12px;line-height:13px;color:#0ad20a;white-space:pre">P6:</div>
<div style="position:absolute;left:804px;top:549px;font-size:12px;line-height:13px;color:#000000;white-space:pre;letter-spacing:0.5px">9773ms</div>
<div style="position:absolute;left:804px;top:185px;font-size:12px;line-height:13px;color:#f00000;white-space:pre;letter-spacing:0.5px">9773ms</div>
<div style="position:absolute;left:63px;top:628px;width:1019px;height:10px;background:#eeeeee;"></div>
<svg style="position:absolute;left:0;top:0" width="1146" height="890" shape-rendering="crispEdges"><defs><pattern id="bump1" x="0" y="1" width="4" height="4" patternUnits="userSpaceOnUse"><rect x="0" y="0" width="1" height="1" fill="#7c8ea3"/><rect x="1" y="1" width="1" height="1" fill="#ffffff"/><rect x="2" y="2" width="1" height="1" fill="#7c8ea3"/><rect x="3" y="3" width="1" height="1" fill="#ffffff"/></pattern></defs><rect x="66" y="633" width="1013" height="4" fill="url(#bump1)"/></svg>
<div style="position:absolute;left:63px;top:638px;width:1019px;height:131px;background:#ffffff;border-top:2px solid #7a8a99;border-left:2px solid #7a8a99;border-bottom:1px solid #7a8a99;"></div>
<div style="position:absolute;left:63px;top:769px;width:1019px;height:28px;background:#eeeeee;border-left:2px solid #7a8a99;"></div>
<div style="position:absolute;left:1084px;top:158px;width:1px;height:642px;background:#9aaabb;"></div>
<div style="position:absolute;left:65px;top:640px;width:998px;height:128px;overflow:hidden;">
<div style="position:absolute;left:0px;top:-7px;font-size:13px;line-height:15px;color:#333333;white-space:pre;letter-spacing:-0.27px">005240ms: PID: 5; Local time: 005240ms; Lamport time: 14; Vector time: (7,8,2,8,11,8); Message received; ID: 12; Protocol: Broadcast</div>
<div style="position:absolute;left:0px;top:10px;font-size:13px;line-height:15px;color:#333333;white-space:pre;letter-spacing:-0.27px">005322ms: PID: 3; Local time: 005322ms; Lamport time: 14; Vector time: (7,8,11,8,8,2); Message received; ID: 8; Protocol: Broadcast</div>
<div style="position:absolute;left:0px;top:27px;font-size:13px;line-height:15px;color:#333333;white-space:pre;letter-spacing:-0.27px">005546ms: PID: 5; Local time: 005546ms; Lamport time: 15; Vector time: (7,8,8,8,12,8); Message received; ID: 9; Protocol: Broadcast</div>
<div style="position:absolute;left:0px;top:44px;font-size:13px;line-height:15px;color:#333333;white-space:pre;letter-spacing:-0.27px">005559ms: PID: 2; Local time: 005559ms; Lamport time: 15; Vector time: (7,12,8,8,8,8); Message received; ID: 12; Protocol: Broadcast</div>
<div style="position:absolute;left:0px;top:61px;font-size:13px;line-height:15px;color:#333333;white-space:pre;letter-spacing:-0.27px">005684ms: PID: 4; Local time: 005684ms; Lamport time: 15; Vector time: (7,8,8,12,8,8); Message received; ID: 12; Protocol: Broadcast</div>
<div style="position:absolute;left:0px;top:78px;font-size:13px;line-height:15px;color:#333333;white-space:pre;letter-spacing:-0.27px">005687ms: PID: 3; Local time: 005687ms; Lamport time: 15; Vector time: (7,8,12,8,8,8); Message received; ID: 12; Protocol: Broadcast</div>
<div style="position:absolute;left:0px;top:95px;font-size:13px;line-height:15px;color:#333333;white-space:pre;letter-spacing:-0.27px">006241ms: PID: 1; Local time: 006241ms; Lamport time: 16; Vector time: (12,8,8,8,8,8); Message received; ID: 12; Protocol: Broadcast</div>
</div>
<div style="position:absolute;left:1063px;top:640px;width:17px;height:128px;background:#eeeeee;border-left:1px solid #7a8a99;"></div>
<div style="position:absolute;left:1064px;top:640px;width:16px;height:16px;border-top:1px solid #fff;border-left:1px solid #fff;"></div>
<div style="position:absolute;left:1067.0px;top:645.5px;width:0;height:0;border-left:4.5px solid transparent;border-right:4.5px solid transparent;border-bottom:5px solid #222;"></div>
<div style="position:absolute;left:1064px;top:738px;width:16px;height:15px;background:linear-gradient(90deg,#ffffff,#dde8f3 40%,#b8cfe5);border:1px solid #6382bf;"></div>
<div style="position:absolute;left:1068px;top:743px;width:8px;height:1px;background:#6382bf;"></div>
<div style="position:absolute;left:1068px;top:745px;width:8px;height:1px;background:#6382bf;"></div>
<div style="position:absolute;left:1068px;top:747px;width:8px;height:1px;background:#6382bf;"></div>
<div style="position:absolute;left:1064px;top:753px;width:16px;height:15px;border-top:1px solid #fff;border-left:1px solid #fff;"></div>
<div style="position:absolute;left:1067.0px;top:757.5px;width:0;height:0;border-left:4.5px solid transparent;border-right:4.5px solid transparent;border-top:5px solid #222;"></div>
<div style="position:absolute;left:1080px;top:640px;width:2px;height:129px;background:#c8ddf2;"></div>
<div style="position:absolute;left:68px;top:777px;width:13px;height:13px;border:1px solid #7a8a99;background:linear-gradient(#ffffff,#dde8f3 60%,#c8dcef);"></div>
<svg style="position:absolute;left:68px;top:777px" width="13" height="13"><path d="M3,7 L5,10 L10,3" stroke="#222" stroke-width="1.6" fill="none"/></svg>
<div style="position:absolute;left:86px;top:776px;font-size:13px;line-height:15px;color:#333333;font-weight:400;letter-spacing:0px;white-space:pre;">Expert mode</div>
<div style="position:absolute;left:168px;top:777px;width:13px;height:13px;border:1px solid #7a8a99;background:linear-gradient(#ffffff,#dde8f3 60%,#c8dcef);"></div>
<div style="position:absolute;left:186px;top:776px;font-size:13px;line-height:15px;color:#333333;font-weight:400;letter-spacing:0px;white-space:pre;">Lamport time</div>
<div style="position:absolute;left:272px;top:777px;width:13px;height:13px;border:1px solid #7a8a99;background:linear-gradient(#ffffff,#dde8f3 60%,#c8dcef);"></div>
<div style="position:absolute;left:290px;top:776px;font-size:13px;line-height:15px;color:#333333;font-weight:400;letter-spacing:0px;white-space:pre;">Vector time</div>
<div style="position:absolute;left:365px;top:777px;width:13px;height:13px;border:1px solid #7a8a99;background:linear-gradient(#ffffff,#dde8f3 60%,#c8dcef);"></div>
<div style="position:absolute;left:383px;top:776px;font-size:13px;line-height:15px;color:#333333;font-weight:400;letter-spacing:0px;white-space:pre;">Anti-Aliasing</div>
<div style="position:absolute;left:466px;top:777px;width:13px;height:13px;border:1px solid #7a8a99;background:linear-gradient(#ffffff,#dde8f3 60%,#c8dcef);"></div>
<svg style="position:absolute;left:466px;top:777px" width="13" height="13"><path d="M3,7 L5,10 L10,3" stroke="#222" stroke-width="1.6" fill="none"/></svg>
<div style="position:absolute;left:484px;top:776px;font-size:13px;line-height:15px;color:#333333;font-weight:400;letter-spacing:0px;white-space:pre;">Logging</div>
<div style="position:absolute;left:537px;top:777px;width:13px;height:13px;border:1px solid #7a8a99;background:linear-gradient(#ffffff,#dde8f3 60%,#c8dcef);"></div>
<div style="position:absolute;left:555px;top:776px;font-size:13px;line-height:15px;color:#333333;font-weight:400;letter-spacing:0px;white-space:pre;">Filter</div>
<div style="position:absolute;left:589px;top:772px;width:398px;height:24px;background:#ffffff;border:1px solid #7a8a99;"></div>
<div style="position:absolute;left:988px;top:770px;width:93px;height:27px;background:linear-gradient(#ffffff 0%,#f4f8fc 25%,#dde8f3 55%,#b8cfe5 100%);border:1px solid #7a8a99;"></div>
<div style="position:absolute;left:989px;top:771px;width:91px;height:25px;border-top:1px solid #ffffff;border-left:1px solid #ffffff;"></div>
<div style="position:absolute;left:734.5px;width:600px;text-align:center;top:777px;font-size:13px;line-height:15px;color:#333333;font-weight:400;letter-spacing:0px;white-space:pre;">Clear logs</div>
<div style="position:absolute;left:61px;top:801px;width:1024px;height:22px;background:#eeeeee;"></div>
<svg style="position:absolute;left:0;top:0" width="1146" height="890"><path d="M63.5,800 L63.5,813.5 L70.5,820.5 L151.5,820.5 L151.5,800" fill="#c8ddf2" stroke="#6382bf" stroke-width="1"/></svg>
<div style="position:absolute;left:62px;top:797px;width:90px;height:4px;background:#c8ddf2;"></div>
<div style="position:absolute;left:73px;top:804px;font-size:13px;line-height:15px;color:#333333;font-weight:400;letter-spacing:0px;white-space:pre;">Simulator 1</div>
</body></html>
